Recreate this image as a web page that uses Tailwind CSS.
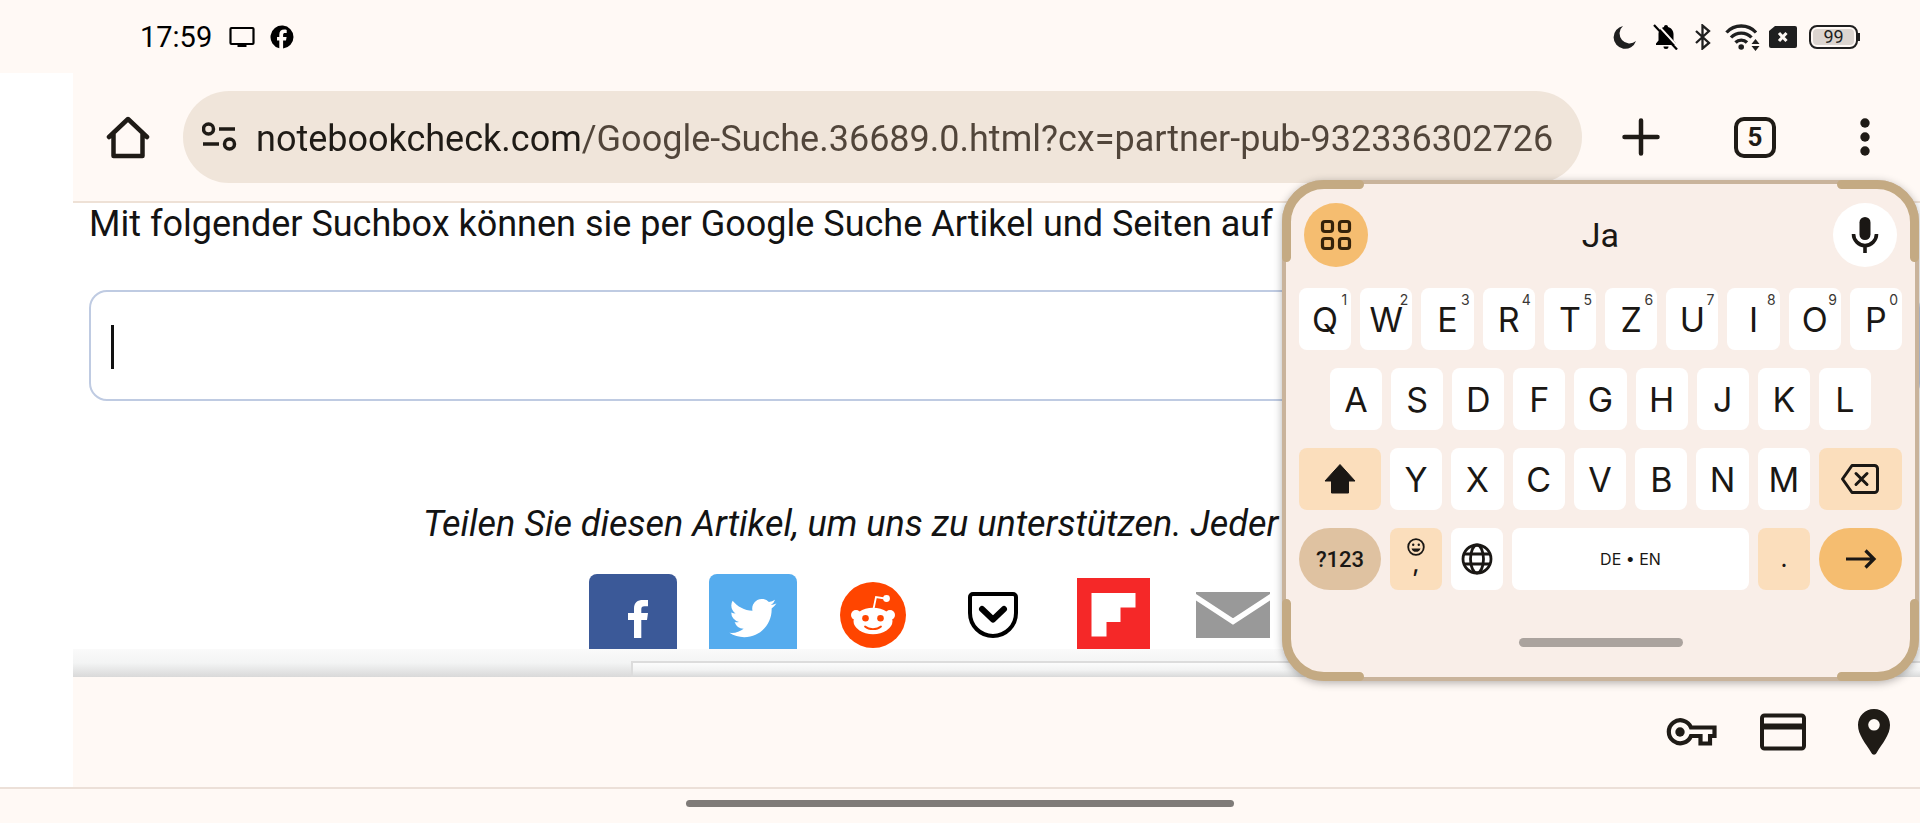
<!DOCTYPE html>
<html lang="de">
<head>
<meta charset="utf-8">
<meta name="viewport" content="width=device-width, initial-scale=1">
<title>Google Suche</title>
<script src="https://cdn.jsdelivr.net/npm/@tailwindcss/browser@4"></script>
</head>
<body class="relative flex min-h-screen flex-col overflow-hidden bg-[#fff9f5] font-[Roboto,sans-serif] text-[#1f1b16]">

<!-- Status bar -->
<header class="flex h-[73px] shrink-0 items-center justify-between pr-[60px] pl-[140px]">
  <div class="flex items-center text-black">
    <time class="text-[29px] leading-8">17:59</time>
    <svg class="ml-[17px] h-6 w-[26px]" viewBox="0 0 26 24" aria-hidden="true"><rect x="1.5" y="3" width="23" height="16" rx="1" fill="none" stroke="currentColor" stroke-width="2.2"/><path d="M8.500 19h9v3h-9z" fill="currentColor"/></svg>
    <svg class="ml-[15px] size-6" viewBox="0 0 24 24" aria-hidden="true"><path fill="currentColor" d="M23.500 12a11.500 11.500 0 1 0-14.200 11.200v-7.700H7v-3.600h2.300V9.800c0-3.400 1.700-5.200 5-5.200.9 0 1.900.1 2.400.3v3.200h-1.700c-1.300 0-1.900.5-1.900 1.900v1.900h3.500l-.6 3.600h-2.900v7.900A11.500 11.500 0 0 0 23.500 12z"/></svg>
  </div>
  <div class="flex items-center text-[#1f1f1f]">
    <svg class="h-[26px] w-6" viewBox="0 0 24 26" aria-hidden="true"><path fill="currentColor" d="M10 2A11.500 11.500 0 1 0 23 17 9.500 9.500 0 0 1 10 2z"/></svg>
    <svg class="ml-4 h-[26px] w-[26px]" viewBox="0 0 26 26" aria-hidden="true"><path fill="#000" d="M13 1c1.200 0 2 .8 2 1.900 3.500.9 5.500 3.800 5.500 7.100v6.500l2.500 3v1.500H3v-1.500l2.500-3V10c0-3.300 2-6.200 5.500-7.100C11 1.800 11.800 1 13 1zM10.500 22.500h5a2.500 2.500 0 0 1-5 0z"/><path d="M3.500-.5l23 25" stroke="#fff9f5" stroke-width="2"/><path d="M1 1l23 24.500" stroke="#000" stroke-width="2.200"/></svg>
    <svg class="ml-[15px] h-[26px] w-[18px]" viewBox="0 0 18 26" aria-hidden="true"><path fill="none" stroke="currentColor" stroke-width="2.300" d="M2 7l13 12-6.500 5.500v-23L15 7 2 19"/></svg>
    <svg class="ml-[13px] h-[28px] w-[35px]" viewBox="0 0 35 28" aria-hidden="true"><g fill="none" stroke="currentColor" stroke-width="3.300"><path d="M1.500 9.500a20 20 0 0 1 29.500 0"/><path d="M6 14.500a14 14 0 0 1 20.500 0"/><path d="M10.500 19.500a8 8 0 0 1 11.500 0"/></g><circle cx="16.200" cy="24" r="2.800" fill="currentColor"/><path fill="currentColor" d="M26.500 21h8L30.500 16zM26.500 23h8l-4 5z"/></svg>
    <svg class="ml-[9px] h-6 w-[28px]" viewBox="0 0 28 24" aria-hidden="true"><path fill="currentColor" d="M6 1h20a2 2 0 0 1 2 2v18a2 2 0 0 1-2 2H2a2 2 0 0 1-2-2V6z"/><path d="M10 8l7.500 8M17.500 8L10 16" stroke="#fff9f5" stroke-width="3"/></svg>
    <div class="ml-3 flex items-center">
      <span class="flex h-6 w-[49px] items-center justify-center rounded-lg border-2 border-[#1f1f1f] bg-[#dcd5d0] text-lg leading-5 ring-2 ring-[#fff9f5] ring-inset">99</span>
      <span class="h-2 w-0.5 bg-[#1f1f1f]"></span>
    </div>
  </div>
</header>

<div class="flex grow">
  <div class="w-[73px] shrink-0 bg-white"></div>
  <div class="flex min-w-0 grow flex-col">

    <!-- Browser toolbar -->
    <nav class="flex h-[130px] shrink-0 items-center border-b-2 border-[#eee1d6] pl-[33px]">
      <button aria-label="Startseite" class="h-[44px] w-[44px] shrink-0">
        <svg viewBox="0 0 44 44"><path d="M3 22L22 4l19 18M7.500 19v22h29V19" fill="none" stroke="currentColor" stroke-width="4.500" stroke-linejoin="round" stroke-linecap="round"/></svg>
      </button>
      <div class="ml-[33px] flex h-[92px] min-w-0 grow items-center rounded-full bg-[#f0e5da] pr-[18px] pl-[19px]">
        <button aria-label="Websiteinformationen" class="h-[30px] w-9 shrink-0">
          <svg viewBox="0 0 36 30"><g fill="none" stroke="currentColor" stroke-width="3.500"><circle cx="6.500" cy="7" r="5"/><path d="M17 7h16M1 22h16"/><circle cx="27.500" cy="22" r="5"/></g></svg>
        </button>
        <input aria-label="Adresse" type="text" readonly value="notebookcheck.com/Google-Suche.36689.0.html?cx=partner-pub-932336302726" class="ml-[18px] h-12 min-w-0 grow bg-[linear-gradient(90deg,#1f1b16_326px,#51453a_326px)] bg-clip-text pt-[3px] text-4xl text-transparent outline-none">
      </div>
      <button aria-label="Neuer Tab" class="ml-[37px] size-11 shrink-0">
        <svg viewBox="0 0 44 44"><path d="M22 5.500v33M5.500 22h33" stroke="currentColor" stroke-width="4.500" stroke-linecap="round"/></svg>
      </button>
      <button aria-label="Tabs" class="ml-[71px] flex h-[41px] w-[42px] shrink-0 items-center justify-center rounded-[10px] border-[4px] border-[#1f1b16] text-[26px] font-bold">5</button>
      <button aria-label="Menü" class="mr-[33px] ml-[67px] size-11 shrink-0">
        <svg viewBox="0 0 44 44" fill="currentColor"><circle cx="22" cy="8" r="4.700"/><circle cx="22" cy="22" r="4.700"/><circle cx="22" cy="36" r="4.700"/></svg>
      </button>
    </nav>

    <!-- Web page -->
    <main class="flex h-[474px] shrink-0 flex-col overflow-hidden bg-white text-[#131313]">
      <p class="pl-4 text-4xl leading-[42px] whitespace-nowrap">Mit folgender Suchbox können sie per Google Suche Artikel und Seiten auf</p>
      <div class="relative mt-[45px] ml-4 h-[112px]">
        <input aria-label="Suche" type="text" class="h-full w-full rounded-[18px] border-2 border-[#bfcbe2] px-5 text-4xl outline-none">
        <span class="absolute top-[35px] left-[22px] h-11 w-[3px] bg-[#111]"></span>
      </div>
      <p class="mt-[100px] pl-[350px] text-4xl leading-[46px] whitespace-nowrap italic">Teilen Sie diesen Artikel, um uns zu unterstützen. Jeder</p>
      <div class="mt-[27px] flex h-[75px] overflow-hidden pl-[500px]">
        <a href="#" aria-label="Facebook" class="flex w-[120px] shrink-0 justify-center">
          <svg class="size-[88px]" viewBox="0 0 88 88"><rect width="88" height="88" rx="8" fill="#3b5998"/><path fill="#fff" d="M45 64V46h-6v-7h6v-4.500C45 28.500 48.500 26 54 26h5v6.300h-3.500c-2.500 0-3.200 1-3.200 3.200V39H59l-1 7h-5.700v18z"/></svg>
        </a>
        <a href="#" aria-label="Twitter" class="flex w-[120px] shrink-0 justify-center">
          <svg class="size-[88px]" viewBox="0 0 88 88"><rect width="88" height="88" rx="8" fill="#55acee"/><path fill="#fff" transform="translate(20.400 20.500) scale(1.960)" d="M23.950 4.570a10 10 0 0 1-2.820.77 4.960 4.960 0 0 0 2.160-2.720c-.95.560-2 .960-3.130 1.190a4.920 4.920 0 0 0-8.390 4.480C7.690 8.100 4.070 6.130 1.640 3.160a4.820 4.820 0 0 0-.67 2.480c0 1.710.87 3.210 2.190 4.100a4.900 4.900 0 0 1-2.230-.620v.06a4.920 4.920 0 0 0 3.950 4.830 5 5 0 0 1-2.210.080 4.940 4.940 0 0 0 4.600 3.420A9.870 9.870 0 0 1 0 19.540a13.990 13.990 0 0 0 7.550 2.210c9.050 0 14-7.500 14-13.980 0-.210 0-.420-.02-.630a9.940 9.940 0 0 0 2.460-2.550z"/></svg>
        </a>
        <a href="#" aria-label="Reddit" class="flex w-[120px] shrink-0 justify-center pt-2">
          <svg class="size-[66px]" viewBox="0 0 66 66"><circle cx="33" cy="33" r="33" fill="#ff4500"/><g fill="#fff"><circle cx="16" cy="33" r="5"/><circle cx="50" cy="33" r="5"/><ellipse cx="33" cy="39" rx="19.500" ry="13.200"/><circle cx="46.500" cy="16.500" r="3.400"/></g><path d="M33.500 27l2.500-12 9 1.500" fill="none" stroke="#fff" stroke-width="1.800"/><g fill="#ff4500"><circle cx="25.500" cy="36.300" r="3.300"/><circle cx="40.500" cy="36.300" r="3.300"/></g><path d="M25 44.500c4 3.500 12 3.500 16 0" fill="none" stroke="#ff4500" stroke-width="1.800" stroke-linecap="round"/></svg>
        </a>
        <a href="#" aria-label="Pocket" class="flex w-[120px] shrink-0 justify-center pt-[18px]">
          <svg class="h-[46px] w-[50px]" viewBox="0 0 50 46" fill="none" stroke="#000" stroke-linejoin="round" stroke-linecap="round"><path stroke-width="4" d="M5 2h40a3 3 0 0 1 3 3v16a23 23 0 0 1-46 0V5a3 3 0 0 1 3-3z"/><path stroke-width="6" d="M14 17l11 10.500L36 17"/></svg>
        </a>
        <a href="#" aria-label="Flipboard" class="flex w-[120px] shrink-0 justify-center pt-1">
          <svg class="size-[73px]" viewBox="0 0 73 73"><path fill="#f52828" d="M0 0h73v73H0z"/><path fill="#fff" d="M14.500 15h44v14.500h-15V44h-14v14.500h-15z"/></svg>
        </a>
        <a href="#" aria-label="E-Mail" class="flex w-[120px] shrink-0 justify-center pt-[18px]">
          <svg class="h-[46px] w-[74px]" viewBox="0 0 74 46"><path fill="#999" d="M0 0h74v46H0z"/><path d="M-2 4l39 25.500L76 4" fill="none" stroke="#fff" stroke-width="5.500"/></svg>
        </a>
      </div>
      <div class="h-7 bg-linear-to-b from-[#fafafa] via-[#f3f4f4] to-[#d9d9d9] pt-3 pl-[558px]">
        <div class="h-4 border-t-2 border-l-2 border-[#dcdcdc] bg-linear-to-b from-[#fcfcfc] via-[#f2f3f3] to-[#d9d9d9]"></div>
      </div>
    </main>

    <!-- Autofill bar -->
    <div class="flex h-[110px] grow items-center justify-end pr-7">
      <button aria-label="Passwörter" class="mr-px h-[30px] w-[52px]">
        <svg viewBox="0 0 52 30"><path d="M26 10.500h23.500v8.500H45v7.500H35.500V19H26a11.500 11.500 0 1 1 0-8.500z" fill="none" stroke="currentColor" stroke-width="4.200"/><circle cx="15" cy="15" r="4.700" fill="currentColor"/><path d="M38 16.500h4.500v7H38z" fill="#fff9f5"/></svg>
      </button>
      <button aria-label="Zahlungsmethoden" class="ml-[42px] h-[38px] w-[46px]">
        <svg viewBox="0 0 46 38"><rect x="2" y="2.500" width="42" height="33" rx="2.500" fill="none" stroke="currentColor" stroke-width="4"/><path fill="currentColor" d="M2 10.500h42v6H2z"/></svg>
      </button>
      <button aria-label="Adressen" class="ml-[50px] h-[48px] w-[36px]">
        <svg viewBox="0 0 36 48"><path fill="currentColor" fill-rule="evenodd" d="M18 1C9 1 2 8 2 17c0 10 7.500 18 13.500 28 1.200 2.300 3.800 2.300 5 0C26.500 35 34 27 34 17 34 8 27 1 18 1zm0 10a5.800 5.800 0 1 0 0 11.600A5.800 5.800 0 0 0 18 11z"/></svg>
      </button>
    </div>
  </div>
</div>

<!-- System navigation -->
<footer class="flex h-9 shrink-0 justify-center border-t-2 border-[#ece0d8] pt-[11px]">
  <span class="h-[7px] w-[548px] rounded-full bg-[#7f7b78]"></span>
</footer>

<!-- Floating keyboard -->
<section aria-label="Tastatur" class="absolute top-[180px] right-px w-[637px] rounded-[42px] border-4 border-[#c9b39b] bg-[#f9eee8] px-[13px] pt-[19px] pb-[30px] font-[Inter,sans-serif] text-[#1a1714] shadow-[0_2px_8px_rgba(0,0,0,0.3)]">
  <svg class="absolute -top-1 -left-1 size-[82px]" viewBox="0 0 82 82" aria-hidden="true"><path d="M77.500 4.500H42A37.500 37.500 0 0 0 4.500 42v35.500" fill="none" stroke="#c4aa83" stroke-width="9" stroke-linecap="round"/></svg>
  <svg class="absolute -top-1 -right-1 size-[82px] rotate-90" viewBox="0 0 82 82" aria-hidden="true"><path d="M77.500 4.500H42A37.500 37.500 0 0 0 4.500 42v35.500" fill="none" stroke="#c4aa83" stroke-width="9" stroke-linecap="round"/></svg>
  <svg class="absolute -right-1 -bottom-1 size-[82px] rotate-180" viewBox="0 0 82 82" aria-hidden="true"><path d="M77.500 4.500H42A37.500 37.500 0 0 0 4.500 42v35.500" fill="none" stroke="#c4aa83" stroke-width="9" stroke-linecap="round"/></svg>
  <svg class="absolute -bottom-1 -left-1 size-[82px] -rotate-90" viewBox="0 0 82 82" aria-hidden="true"><path d="M77.500 4.500H42A37.500 37.500 0 0 0 4.500 42v35.500" fill="none" stroke="#c4aa83" stroke-width="9" stroke-linecap="round"/></svg>

  <div class="flex h-16 items-center justify-between px-[5px]">
    <button aria-label="Funktionen" class="flex size-16 items-center justify-center rounded-full bg-[#f5bd70] text-[#35230a]">
      <svg class="size-8" viewBox="0 0 32 32" fill="none" stroke="currentColor" stroke-width="3.200"><rect x="2.500" y="2.500" width="10" height="10" rx="2.500"/><rect x="19.500" y="2.500" width="10" height="10" rx="2.500"/><rect x="2.500" y="19.500" width="10" height="10" rx="2.500"/><rect x="19.500" y="19.500" width="10" height="10" rx="2.500"/></svg>
    </button>
    <button class="font-[Roboto,sans-serif] text-[34px] leading-10">Ja</button>
    <button aria-label="Spracheingabe" class="flex size-16 items-center justify-center rounded-full bg-white">
      <svg class="h-9 w-7" viewBox="0 0 28 36"><rect x="8.500" y="0" width="11" height="23" rx="5.500" fill="currentColor"/><path d="M2.500 17a11.500 11.500 0 0 0 23 0M14 28.500V36" fill="none" stroke="currentColor" stroke-width="3.600"/></svg>
    </button>
  </div>

  <div class="mt-[21px] flex flex-col gap-[18px]">
    <div class="flex gap-[9px] text-[34px]">
      <button class="relative h-[62px] flex-1 rounded-lg bg-white">Q<span class="absolute top-1 right-1 text-sm leading-4 text-[#3a3734]">1</span></button>
      <button class="relative h-[62px] flex-1 rounded-lg bg-white">W<span class="absolute top-1 right-1 text-sm leading-4 text-[#3a3734]">2</span></button>
      <button class="relative h-[62px] flex-1 rounded-lg bg-white">E<span class="absolute top-1 right-1 text-sm leading-4 text-[#3a3734]">3</span></button>
      <button class="relative h-[62px] flex-1 rounded-lg bg-white">R<span class="absolute top-1 right-1 text-sm leading-4 text-[#3a3734]">4</span></button>
      <button class="relative h-[62px] flex-1 rounded-lg bg-white">T<span class="absolute top-1 right-1 text-sm leading-4 text-[#3a3734]">5</span></button>
      <button class="relative h-[62px] flex-1 rounded-lg bg-white">Z<span class="absolute top-1 right-1 text-sm leading-4 text-[#3a3734]">6</span></button>
      <button class="relative h-[62px] flex-1 rounded-lg bg-white">U<span class="absolute top-1 right-1 text-sm leading-4 text-[#3a3734]">7</span></button>
      <button class="relative h-[62px] flex-1 rounded-lg bg-white">I<span class="absolute top-1 right-1 text-sm leading-4 text-[#3a3734]">8</span></button>
      <button class="relative h-[62px] flex-1 rounded-lg bg-white">O<span class="absolute top-1 right-1 text-sm leading-4 text-[#3a3734]">9</span></button>
      <button class="relative h-[62px] flex-1 rounded-lg bg-white">P<span class="absolute top-1 right-1 text-sm leading-4 text-[#3a3734]">0</span></button>
    </div>
    <div class="flex gap-[9px] px-[31px] text-[34px]">
      <button class="h-[62px] flex-1 rounded-lg bg-white">A</button>
      <button class="h-[62px] flex-1 rounded-lg bg-white">S</button>
      <button class="h-[62px] flex-1 rounded-lg bg-white">D</button>
      <button class="h-[62px] flex-1 rounded-lg bg-white">F</button>
      <button class="h-[62px] flex-1 rounded-lg bg-white">G</button>
      <button class="h-[62px] flex-1 rounded-lg bg-white">H</button>
      <button class="h-[62px] flex-1 rounded-lg bg-white">J</button>
      <button class="h-[62px] flex-1 rounded-lg bg-white">K</button>
      <button class="h-[62px] flex-1 rounded-lg bg-white">L</button>
    </div>
    <div class="flex gap-[9px] text-[34px]">
      <button aria-label="Umschalttaste" class="flex h-[62px] w-[82px] items-center justify-center rounded-lg bg-[#fbdebc]">
        <svg class="size-8" viewBox="0 0 32 32"><path fill="currentColor" stroke="currentColor" stroke-linejoin="round" d="M16 1.500L31 18h-6.500v12h-17V18H1z"/></svg>
      </button>
      <button class="h-[62px] flex-1 rounded-lg bg-white">Y</button>
      <button class="h-[62px] flex-1 rounded-lg bg-white">X</button>
      <button class="h-[62px] flex-1 rounded-lg bg-white">C</button>
      <button class="h-[62px] flex-1 rounded-lg bg-white">V</button>
      <button class="h-[62px] flex-1 rounded-lg bg-white">B</button>
      <button class="h-[62px] flex-1 rounded-lg bg-white">N</button>
      <button class="h-[62px] flex-1 rounded-lg bg-white">M</button>
      <button aria-label="Löschen" class="flex h-[62px] w-[83px] items-center justify-center rounded-lg bg-[#fbdebc]">
        <svg class="h-8 w-10" viewBox="0 0 40 32" fill="none" stroke="currentColor" stroke-width="3" stroke-linejoin="round"><path d="M12 2.500h22.500a3 3 0 0 1 3 3v21a3 3 0 0 1-3 3H12L2.500 16z"/><path d="M16 10.500l11 11M27 10.500l-11 11" stroke-linecap="round"/></svg>
      </button>
    </div>
    <div class="flex gap-[9px]">
      <button class="h-[62px] w-[82px] rounded-full bg-[#dfc2a1] font-[Roboto,sans-serif] text-[22px] font-medium">?123</button>
      <button aria-label="Emoji und Komma" class="flex h-[62px] w-[52px] flex-col items-center rounded-lg bg-[#fbdebc] pt-2.5">
        <svg class="size-[18px] shrink-0" viewBox="0 0 18 18"><circle cx="9" cy="9" r="7.800" fill="none" stroke="currentColor" stroke-width="1.800"/><circle cx="6.200" cy="6.800" r="1.200" fill="currentColor"/><circle cx="11.800" cy="6.800" r="1.200" fill="currentColor"/><path d="M4.500 10.500h9a4.700 4.700 0 0 1-9 0z" fill="currentColor"/></svg>
        <span class="text-2xl leading-4 font-medium">,</span>
      </button>
      <button aria-label="Sprache wechseln" class="flex h-[62px] w-[52px] items-center justify-center rounded-lg bg-white">
        <svg class="size-8" viewBox="0 0 32 32" fill="none" stroke="currentColor" stroke-width="2.800"><circle cx="16" cy="16" r="14"/><ellipse cx="16" cy="16" rx="6.500" ry="14"/><path d="M3 11h26M3 21h26"/></svg>
      </button>
      <button class="h-[62px] flex-1 rounded-lg bg-white text-base">DE • EN</button>
      <button class="h-[62px] w-[52px] rounded-lg bg-[#fbdebc] text-2xl">.</button>
      <button aria-label="Los" class="flex h-[62px] w-[83px] items-center justify-center rounded-full bg-[#f5bd70]">
        <svg class="h-5 w-8" viewBox="0 0 32 20" fill="none" stroke="currentColor" stroke-width="3.200"><path d="M1 10h28M20.500 1.500L29 10l-8.500 8.500"/></svg>
      </button>
    </div>
  </div>
  <div class="mt-12 flex justify-center"><span class="h-[9px] w-[164px] rounded-full bg-[#aba39e]"></span></div>
</section>
</body>
</html>
